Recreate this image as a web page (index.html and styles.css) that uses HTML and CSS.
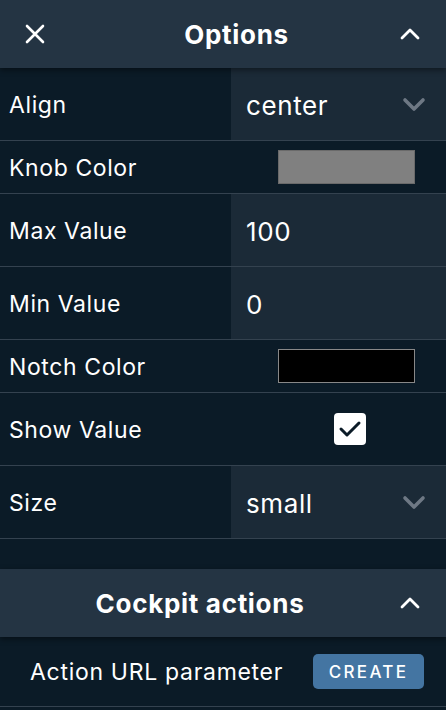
FILE: index.html
```html
<!DOCTYPE html>
<html>
<head>
<meta charset="utf-8">
<link rel="stylesheet" href="styles.css">
</head>
<body>
<div class="panel">
  <header class="bar">
    <span class="bar-left">
      <svg width="20" height="20" viewBox="0 0 20 20"><path d="M2 2 L18 18 M18 2 L2 18" stroke="#fff" stroke-width="2.6" stroke-linecap="round"/></svg>
    </span>
    <h1 class="bar-title title-options">Options</h1>
    <span class="bar-right">
      <svg width="20" height="12" viewBox="0 0 20 12"><path d="M2 10 L10 2 L18 10" fill="none" stroke="#fff" stroke-width="2.8" stroke-linecap="round" stroke-linejoin="round"/></svg>
    </span>
  </header>

  <div class="row tall">
    <div class="label">Align</div>
    <div class="value field">center
      <svg class="caret" width="24" height="15" viewBox="0 0 24 15"><path d="M3 3 L12 12 L21 3" fill="none" stroke="#6e7884" stroke-width="3.6" stroke-linecap="round" stroke-linejoin="round"/></svg>
    </div>
  </div>
  <div class="row short">
    <div class="label">Knob Color</div>
    <div class="value center"><span class="swatch grey"></span></div>
  </div>
  <div class="row tall">
    <div class="label">Max Value</div>
    <div class="value field">100</div>
  </div>
  <div class="row tall">
    <div class="label">Min Value</div>
    <div class="value field">0</div>
  </div>
  <div class="row short">
    <div class="label">Notch Color</div>
    <div class="value center"><span class="swatch black"></span></div>
  </div>
  <div class="row tall">
    <div class="label">Show Value</div>
    <div class="value center">
      <span class="check"><svg width="24" height="20" viewBox="0 0 24 20"><path d="M3 10 L9 16 L21 4" fill="none" stroke="#0b1b27" stroke-width="3" stroke-linecap="round" stroke-linejoin="round"/></svg></span>
    </div>
  </div>
  <div class="row tall">
    <div class="label">Size</div>
    <div class="value field">small
      <svg class="caret" width="24" height="15" viewBox="0 0 24 15"><path d="M3 3 L12 12 L21 3" fill="none" stroke="#6e7884" stroke-width="3.6" stroke-linecap="round" stroke-linejoin="round"/></svg>
    </div>
  </div>

  <div class="spacer"></div>

  <header class="bar">
    <span class="bar-left"></span>
    <h2 class="bar-title title-actions">Cockpit actions</h2>
    <span class="bar-right">
      <svg width="20" height="12" viewBox="0 0 20 12"><path d="M2 10 L10 2 L18 10" fill="none" stroke="#fff" stroke-width="2.8" stroke-linecap="round" stroke-linejoin="round"/></svg>
    </span>
  </header>
  <div class="action-row">
    <span class="action-label">Action URL parameter</span>
    <button class="btn">CREATE</button>
  </div>
</div>
</body>
</html>
```

FILE: styles.css
```css
* { box-sizing: border-box; }
html, body { margin: 0; padding: 0; }
body {
  background: #0b1b27;
  font-family: Inter, "Noto Sans", sans-serif;
  color: #fff;
  width: 446px;
  height: 710px;
  overflow: hidden;
}
.panel { display: flex; flex-direction: column; }
.bar {
  height: 68px;
  background: #243443;
  display: flex;
  align-items: center;
  box-shadow: 0 2px 6px rgba(0,0,0,0.45);
  position: relative;
  z-index: 1;
}
.bar-left, .bar-right {
  width: 70px;
  display: flex;
  align-items: center;
}
.bar-left { padding-left: 25px; }
.bar-right { justify-content: flex-end; padding-right: 26px; }
.bar-title {
  flex: 1;
  margin: 0;
  text-align: center;
  font-size: 26px;
  font-weight: 700;
  letter-spacing: 0.7px;
}
.title-options { padding-left: 27px; }
.title-actions { padding-right: 46px; }
.row {
  display: flex;
  border-bottom: 1px solid #34424f;
}
.row.tall { height: 73px; }
.row.short { height: 53px; }
.label {
  width: 231px;
  padding-left: 9px;
  display: flex;
  align-items: center;
  font-size: 23px;
  letter-spacing: 0.6px;
  padding-top: 2px;
}
.value {
  flex: 1;
  display: flex;
  align-items: center;
}
.value.field {
  background: #1b2a37;
  padding-left: 15px;
  font-size: 26px;
  letter-spacing: 0.6px;
  position: relative;
  padding-top: 2px;
}
.value.center { justify-content: center; padding-left: 16px; }
.caret { position: absolute; right: 20px; top: 29px; }
.swatch {
  width: 137px;
  height: 34px;
  border: 1px solid #777;
}
.swatch.grey { background: #808080; border-color: #6a6a6a; }
.swatch.black { background: #000; border-color: #888; }
.check {
  width: 32px;
  height: 32px;
  background: #fff;
  border-radius: 4px;
  display: flex;
  align-items: center;
  justify-content: center;
  margin-left: 7px;
}
.spacer { height: 30px; }
.action-row {
  height: 70px;
  display: flex;
  align-items: center;
  padding-left: 30px;
  padding-right: 22px;
  border-bottom: 1px solid #34424f;
}
.action-label { flex: 1; font-size: 23px; letter-spacing: 0.7px; }
.btn {
  background: #4475a2;
  color: #fff;
  border: none;
  border-radius: 5px;
  width: 111px;
  height: 35px;
  font-family: Inter, "Noto Sans", sans-serif;
  font-size: 17px;
  letter-spacing: 2.3px;
  font-weight: 500;
  padding: 0;
}
```
